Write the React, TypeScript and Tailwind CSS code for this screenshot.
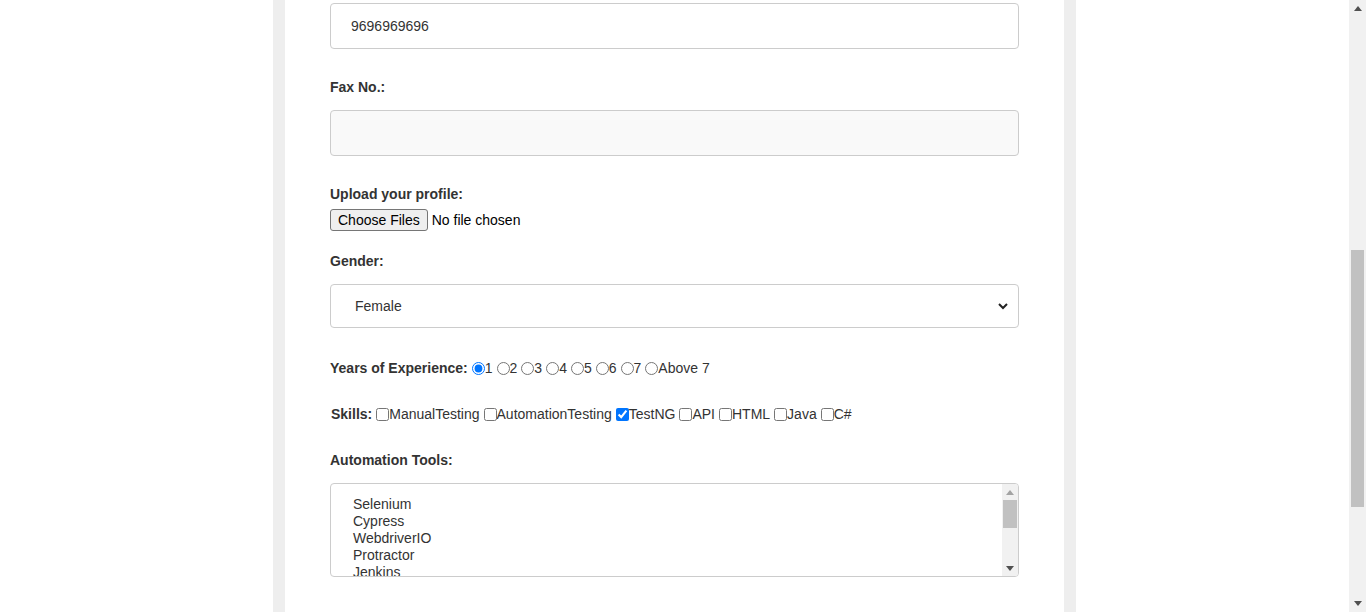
const years = ['1', '2', '3', '4', '5', '6', '7', 'Above 7']
const skills = ['ManualTesting', 'AutomationTesting', 'TestNG', 'API', 'HTML', 'Java', 'C#']
const tools = ['Selenium', 'Cypress', 'WebdriverIO', 'Protractor', 'Jenkins']

function Arrow({ up, color = '#505050' }: { up?: boolean; color?: string }) {
  return (
    <svg width="8" height="5" viewBox="0 0 8 5">
      <path d={up ? 'M0 5 L4 0 L8 5 Z' : 'M0 0 L8 0 L4 5 Z'} fill={color} />
    </svg>
  )
}

export default function App() {
  return (
    <div className="flex h-[612px] w-full overflow-hidden bg-white font-['Liberation_Sans',Arial,sans-serif] text-[14px] text-[#333]">
      <div className="flex flex-1 justify-center">
        <div className="h-full w-[803px] border-x-[12px] border-[#eeeeee] bg-white px-[45px] pt-[3px]">
          {/* Phone */}
          <div className="flex h-[46px] items-center rounded-[4px] border border-[#cccccc] bg-white pl-[20px]">
            9696969696
          </div>

          {/* Fax */}
          <div className="mt-[28px] h-[20px] font-bold leading-[20px]">Fax No.:</div>
          <div className="mt-[13px] h-[46px] rounded-[4px] border border-[#cccccc] bg-[#f9f9f9]" />

          {/* Upload */}
          <div className="mt-[28px] h-[20px] font-bold leading-[20px]">Upload your profile:</div>
          <div className="mt-[5px] flex h-[22px] items-center gap-[4px]">
            <button className="h-[22px] rounded-[3px] border border-[#767676] bg-[#efefef] px-[7px] text-[14px] leading-[20px] text-black">
              Choose Files
            </button>
            <span className="text-black">No file chosen</span>
          </div>

          {/* Gender */}
          <div className="mt-[20px] h-[20px] font-bold leading-[20px]">Gender:</div>
          <div className="mt-[13px] flex h-[44px] items-center justify-between rounded-[4px] border border-[#cccccc] bg-white pl-[24px] pr-[10px]">
            <span>Female</span>
            <svg width="10" height="7" viewBox="0 0 10 7">
              <path d="M1 1 L5 5 L9 1" fill="none" stroke="#222" strokeWidth="2" />
            </svg>
          </div>

          {/* Years */}
          <div className="mt-[30px] flex h-[20px] items-center leading-[20px]">
            <span className="mr-[4px] font-bold">Years of Experience:</span>
            {years.map((y, i) => (
              <label key={y} className="mr-[4px] flex items-center">
                <input type="radio" name="exp" defaultChecked={i === 0} className="m-0 h-[13px] w-[13px]" />
                <span>{y}</span>
              </label>
            ))}
          </div>

          {/* Skills */}
          <div className="mt-[26px] flex h-[20px] items-center leading-[20px]">
            <span className="ml-px mr-[4px] font-bold">Skills:</span>
            {skills.map((s) => (
              <label key={s} className="mr-[4px] flex items-center">
                <input type="checkbox" defaultChecked={s === 'TestNG'} className="m-0 h-[13px] w-[13px]" />
                <span>{s}</span>
              </label>
            ))}
          </div>

          {/* Automation tools */}
          <div className="mt-[26px] h-[20px] font-bold leading-[20px]">Automation Tools:</div>
          <div className="mt-[13px] flex h-[94px] overflow-hidden rounded-[4px] border border-[#cccccc] bg-white">
            <div className="flex-1 overflow-hidden pl-[22px] pt-[12px] leading-[17px]">
              {tools.map((t) => (
                <div key={t}>{t}</div>
              ))}
            </div>
            <div className="flex w-[16px] flex-col items-center bg-[#f1f1f1]">
              <div className="flex h-[16px] items-center justify-center">
                <Arrow up color="#a3a3a3" />
              </div>
              <div className="h-[28px] w-[14px] bg-[#c1c1c1]" />
              <div className="flex-1" />
              <div className="flex h-[16px] items-center justify-center">
                <Arrow />
              </div>
            </div>
          </div>
        </div>
      </div>

      {/* Page scrollbar */}
      <div className="flex w-[17px] flex-col items-center bg-[#f1f1f1]">
        <div className="flex h-[17px] items-center justify-center">
          <Arrow up />
        </div>
        <div className="mt-[233px] h-[257px] w-[13px] bg-[#c1c1c1]" />
        <div className="flex-1" />
        <div className="flex h-[17px] items-center justify-center">
          <Arrow />
        </div>
      </div>
    </div>
  )
}
